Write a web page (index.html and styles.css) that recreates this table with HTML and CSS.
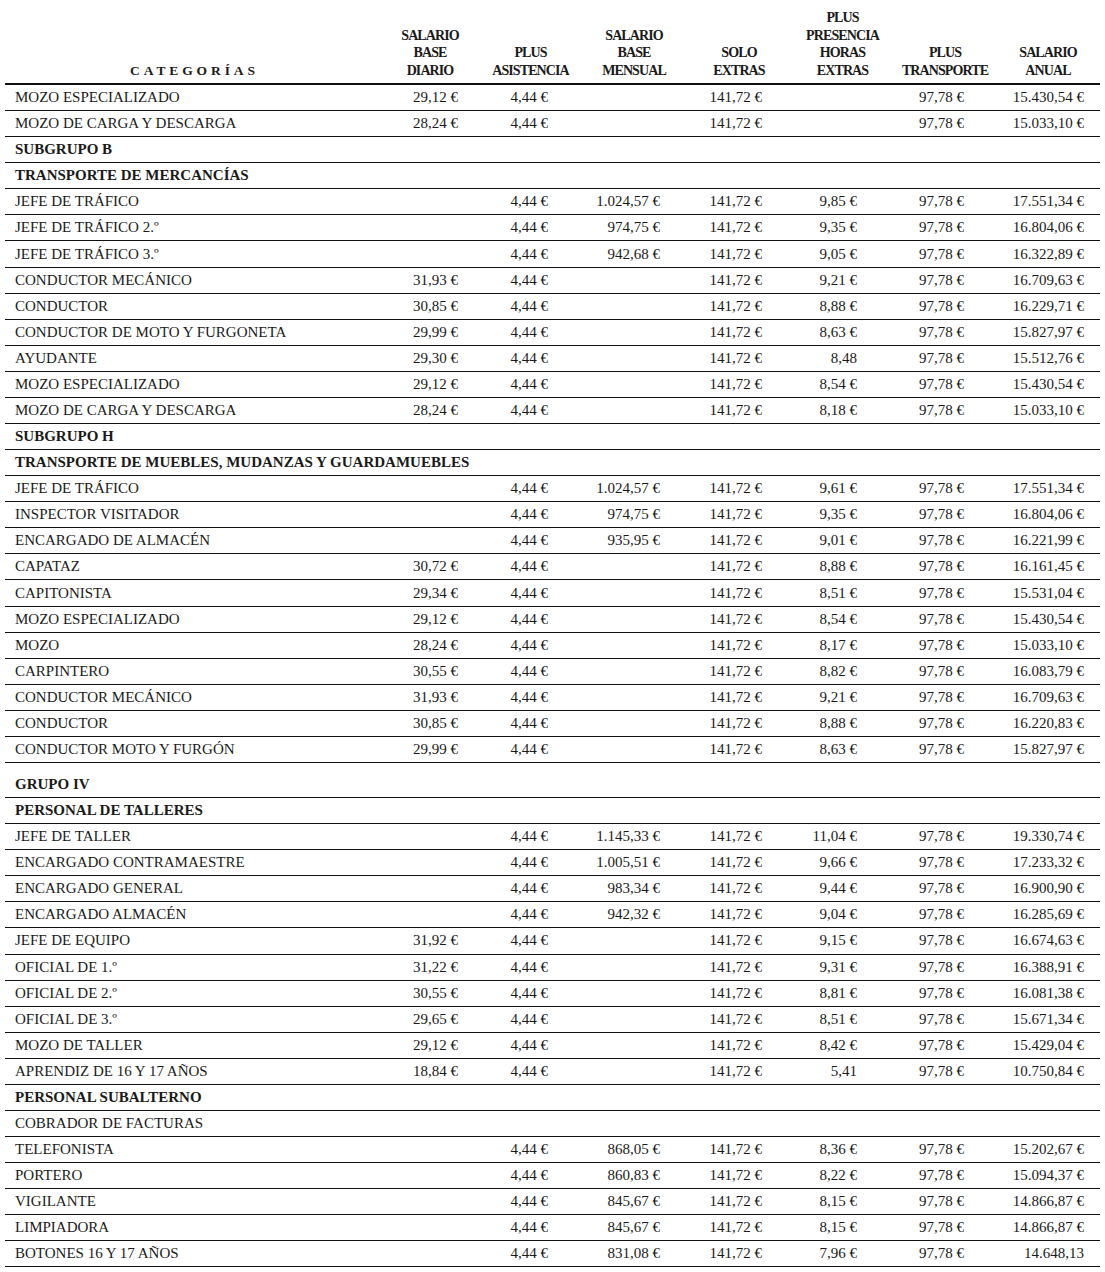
FILE: index.html
```html
<!DOCTYPE html>
<html lang="es">
<head>
  <meta charset="UTF-8" />
  <title>Tablas salariales</title>
  <link rel="stylesheet" href="styles.css">
</head>
<body>
  <table class="salarios">
    <colgroup>
      <col class="c-cat">
      <col class="c-diario">
      <col class="c-asist">
      <col class="c-mensual">
      <col class="c-solo">
      <col class="c-presencia">
      <col class="c-transp">
      <col class="c-anual">
    </colgroup>
    <thead>
      <tr>
        <th class="cat">CATEGORÍAS</th>
        <th>SALARIO<br>BASE<br>DIARIO</th>
        <th>PLUS<br>ASISTENCIA</th>
        <th>SALARIO<br>BASE<br>MENSUAL</th>
        <th>SOLO<br>EXTRAS</th>
        <th>PLUS<br>PRESENCIA<br>HORAS<br>EXTRAS</th>
        <th>PLUS<br>TRANSPORTE</th>
        <th>SALARIO<br>ANUAL</th>
      </tr>
    </thead>
    <tbody>
      <tr><td>MOZO ESPECIALIZADO</td><td>29,12 €</td><td>4,44 €</td><td></td><td>141,72 €</td><td></td><td>97,78 €</td><td>15.430,54 €</td></tr>
      <tr><td>MOZO DE CARGA Y DESCARGA</td><td>28,24 €</td><td>4,44 €</td><td></td><td>141,72 €</td><td></td><td>97,78 €</td><td>15.033,10 €</td></tr>
      <tr class="grupo"><td colspan="8">SUBGRUPO B</td></tr>
      <tr class="grupo"><td colspan="8">TRANSPORTE DE MERCANCÍAS</td></tr>
      <tr><td>JEFE DE TRÁFICO</td><td></td><td>4,44 €</td><td>1.024,57 €</td><td>141,72 €</td><td>9,85 €</td><td>97,78 €</td><td>17.551,34 €</td></tr>
      <tr><td>JEFE DE TRÁFICO 2.º</td><td></td><td>4,44 €</td><td>974,75 €</td><td>141,72 €</td><td>9,35 €</td><td>97,78 €</td><td>16.804,06 €</td></tr>
      <tr><td>JEFE DE TRÁFICO 3.º</td><td></td><td>4,44 €</td><td>942,68 €</td><td>141,72 €</td><td>9,05 €</td><td>97,78 €</td><td>16.322,89 €</td></tr>
      <tr><td>CONDUCTOR MECÁNICO</td><td>31,93 €</td><td>4,44 €</td><td></td><td>141,72 €</td><td>9,21 €</td><td>97,78 €</td><td>16.709,63 €</td></tr>
      <tr><td>CONDUCTOR</td><td>30,85 €</td><td>4,44 €</td><td></td><td>141,72 €</td><td>8,88 €</td><td>97,78 €</td><td>16.229,71 €</td></tr>
      <tr><td>CONDUCTOR DE MOTO Y FURGONETA</td><td>29,99 €</td><td>4,44 €</td><td></td><td>141,72 €</td><td>8,63 €</td><td>97,78 €</td><td>15.827,97 €</td></tr>
      <tr><td>AYUDANTE</td><td>29,30 €</td><td>4,44 €</td><td></td><td>141,72 €</td><td>8,48</td><td>97,78 €</td><td>15.512,76 €</td></tr>
      <tr><td>MOZO ESPECIALIZADO</td><td>29,12 €</td><td>4,44 €</td><td></td><td>141,72 €</td><td>8,54 €</td><td>97,78 €</td><td>15.430,54 €</td></tr>
      <tr><td>MOZO DE CARGA Y DESCARGA</td><td>28,24 €</td><td>4,44 €</td><td></td><td>141,72 €</td><td>8,18 €</td><td>97,78 €</td><td>15.033,10 €</td></tr>
      <tr class="grupo"><td colspan="8">SUBGRUPO H</td></tr>
      <tr class="grupo"><td colspan="8">TRANSPORTE DE MUEBLES, MUDANZAS Y GUARDAMUEBLES</td></tr>
      <tr><td>JEFE DE TRÁFICO</td><td></td><td>4,44 €</td><td>1.024,57 €</td><td>141,72 €</td><td>9,61 €</td><td>97,78 €</td><td>17.551,34 €</td></tr>
      <tr><td>INSPECTOR VISITADOR</td><td></td><td>4,44 €</td><td>974,75 €</td><td>141,72 €</td><td>9,35 €</td><td>97,78 €</td><td>16.804,06 €</td></tr>
      <tr><td>ENCARGADO DE ALMACÉN</td><td></td><td>4,44 €</td><td>935,95 €</td><td>141,72 €</td><td>9,01 €</td><td>97,78 €</td><td>16.221,99 €</td></tr>
      <tr><td>CAPATAZ</td><td>30,72 €</td><td>4,44 €</td><td></td><td>141,72 €</td><td>8,88 €</td><td>97,78 €</td><td>16.161,45 €</td></tr>
      <tr><td>CAPITONISTA</td><td>29,34 €</td><td>4,44 €</td><td></td><td>141,72 €</td><td>8,51 €</td><td>97,78 €</td><td>15.531,04 €</td></tr>
      <tr><td>MOZO ESPECIALIZADO</td><td>29,12 €</td><td>4,44 €</td><td></td><td>141,72 €</td><td>8,54 €</td><td>97,78 €</td><td>15.430,54 €</td></tr>
      <tr><td>MOZO</td><td>28,24 €</td><td>4,44 €</td><td></td><td>141,72 €</td><td>8,17 €</td><td>97,78 €</td><td>15.033,10 €</td></tr>
      <tr><td>CARPINTERO</td><td>30,55 €</td><td>4,44 €</td><td></td><td>141,72 €</td><td>8,82 €</td><td>97,78 €</td><td>16.083,79 €</td></tr>
      <tr><td>CONDUCTOR MECÁNICO</td><td>31,93 €</td><td>4,44 €</td><td></td><td>141,72 €</td><td>9,21 €</td><td>97,78 €</td><td>16.709,63 €</td></tr>
      <tr><td>CONDUCTOR</td><td>30,85 €</td><td>4,44 €</td><td></td><td>141,72 €</td><td>8,88 €</td><td>97,78 €</td><td>16.220,83 €</td></tr>
      <tr><td>CONDUCTOR MOTO Y FURGÓN</td><td>29,99 €</td><td>4,44 €</td><td></td><td>141,72 €</td><td>8,63 €</td><td>97,78 €</td><td>15.827,97 €</td></tr>
      <tr class="grupo espacio"><td colspan="8">GRUPO IV</td></tr>
      <tr class="grupo"><td colspan="8">PERSONAL DE TALLERES</td></tr>
      <tr><td>JEFE DE TALLER</td><td></td><td>4,44 €</td><td>1.145,33 €</td><td>141,72 €</td><td>11,04 €</td><td>97,78 €</td><td>19.330,74 €</td></tr>
      <tr><td>ENCARGADO CONTRAMAESTRE</td><td></td><td>4,44 €</td><td>1.005,51 €</td><td>141,72 €</td><td>9,66 €</td><td>97,78 €</td><td>17.233,32 €</td></tr>
      <tr><td>ENCARGADO GENERAL</td><td></td><td>4,44 €</td><td>983,34 €</td><td>141,72 €</td><td>9,44 €</td><td>97,78 €</td><td>16.900,90 €</td></tr>
      <tr><td>ENCARGADO ALMACÉN</td><td></td><td>4,44 €</td><td>942,32 €</td><td>141,72 €</td><td>9,04 €</td><td>97,78 €</td><td>16.285,69 €</td></tr>
      <tr><td>JEFE DE EQUIPO</td><td>31,92 €</td><td>4,44 €</td><td></td><td>141,72 €</td><td>9,15 €</td><td>97,78 €</td><td>16.674,63 €</td></tr>
      <tr><td>OFICIAL DE 1.º</td><td>31,22 €</td><td>4,44 €</td><td></td><td>141,72 €</td><td>9,31 €</td><td>97,78 €</td><td>16.388,91 €</td></tr>
      <tr><td>OFICIAL DE 2.º</td><td>30,55 €</td><td>4,44 €</td><td></td><td>141,72 €</td><td>8,81 €</td><td>97,78 €</td><td>16.081,38 €</td></tr>
      <tr><td>OFICIAL DE 3.º</td><td>29,65 €</td><td>4,44 €</td><td></td><td>141,72 €</td><td>8,51 €</td><td>97,78 €</td><td>15.671,34 €</td></tr>
      <tr><td>MOZO DE TALLER</td><td>29,12 €</td><td>4,44 €</td><td></td><td>141,72 €</td><td>8,42 €</td><td>97,78 €</td><td>15.429,04 €</td></tr>
      <tr><td>APRENDIZ DE 16 Y 17 AÑOS</td><td>18,84 €</td><td>4,44 €</td><td></td><td>141,72 €</td><td>5,41</td><td>97,78 €</td><td>10.750,84 €</td></tr>
      <tr class="grupo"><td colspan="8">PERSONAL SUBALTERNO</td></tr>
      <tr><td colspan="8">COBRADOR DE FACTURAS</td></tr>
      <tr><td>TELEFONISTA</td><td></td><td>4,44 €</td><td>868,05 €</td><td>141,72 €</td><td>8,36 €</td><td>97,78 €</td><td>15.202,67 €</td></tr>
      <tr><td>PORTERO</td><td></td><td>4,44 €</td><td>860,83 €</td><td>141,72 €</td><td>8,22 €</td><td>97,78 €</td><td>15.094,37 €</td></tr>
      <tr><td>VIGILANTE</td><td></td><td>4,44 €</td><td>845,67 €</td><td>141,72 €</td><td>8,15 €</td><td>97,78 €</td><td>14.866,87 €</td></tr>
      <tr><td>LIMPIADORA</td><td></td><td>4,44 €</td><td>845,67 €</td><td>141,72 €</td><td>8,15 €</td><td>97,78 €</td><td>14.866,87 €</td></tr>
      <tr><td>BOTONES 16 Y 17 AÑOS</td><td></td><td>4,44 €</td><td>831,08 €</td><td>141,72 €</td><td>7,96 €</td><td>97,78 €</td><td>14.648,13</td></tr>
    </tbody>
  </table>
</body>
</html>
```

FILE: styles.css
```css
body {
  margin: 0;
  font-family: "Liberation Serif", "Times New Roman", serif;
  color: #1a1a1a;
  background-color: #ffffff;
}

.salarios {
  margin-left: 5px;
  width: 1095px;
  border-collapse: collapse;
  table-layout: fixed;
}

.c-cat { width: 375px; }
.c-diario { width: 100px; }
.c-asist { width: 101px; }
.c-mensual { width: 106px; }
.c-solo { width: 104px; }
.c-presencia { width: 103px; }
.c-transp { width: 102px; }
.c-anual { width: 104px; }

.salarios th {
  height: 79px;
  padding: 0 0 4px;
  font-size: 14px;
  line-height: 17.5px;
  font-weight: bold;
  letter-spacing: -0.9px;
  text-align: center;
  vertical-align: bottom;
  border-bottom: 2px solid #111111;
}

.salarios th.cat {
  font-size: 13.5px;
  letter-spacing: 3.9px;
  padding-left: 4px;
}

.salarios td {
  height: 25.08px;
  padding: 0;
  font-size: 15px;
  line-height: 17px;
  text-align: right;
  white-space: nowrap;
  border-bottom: 1px solid #111111;
}

.salarios td:first-child {
  padding-left: 10px;
  text-align: left;
}

.salarios td:nth-child(2) { padding-right: 22px; }
.salarios td:nth-child(3) { padding-right: 33px; }
.salarios td:nth-child(4) { padding-right: 27px; }
.salarios td:nth-child(5) { padding-right: 29px; }
.salarios td:nth-child(6) { padding-right: 37px; }
.salarios td:nth-child(7) { padding-right: 32px; }
.salarios td:nth-child(8) { padding-right: 16px; }

.grupo td {
  font-weight: bold;
}

.espacio td {
  height: 25px;
  padding-top: 9px;
}
```
